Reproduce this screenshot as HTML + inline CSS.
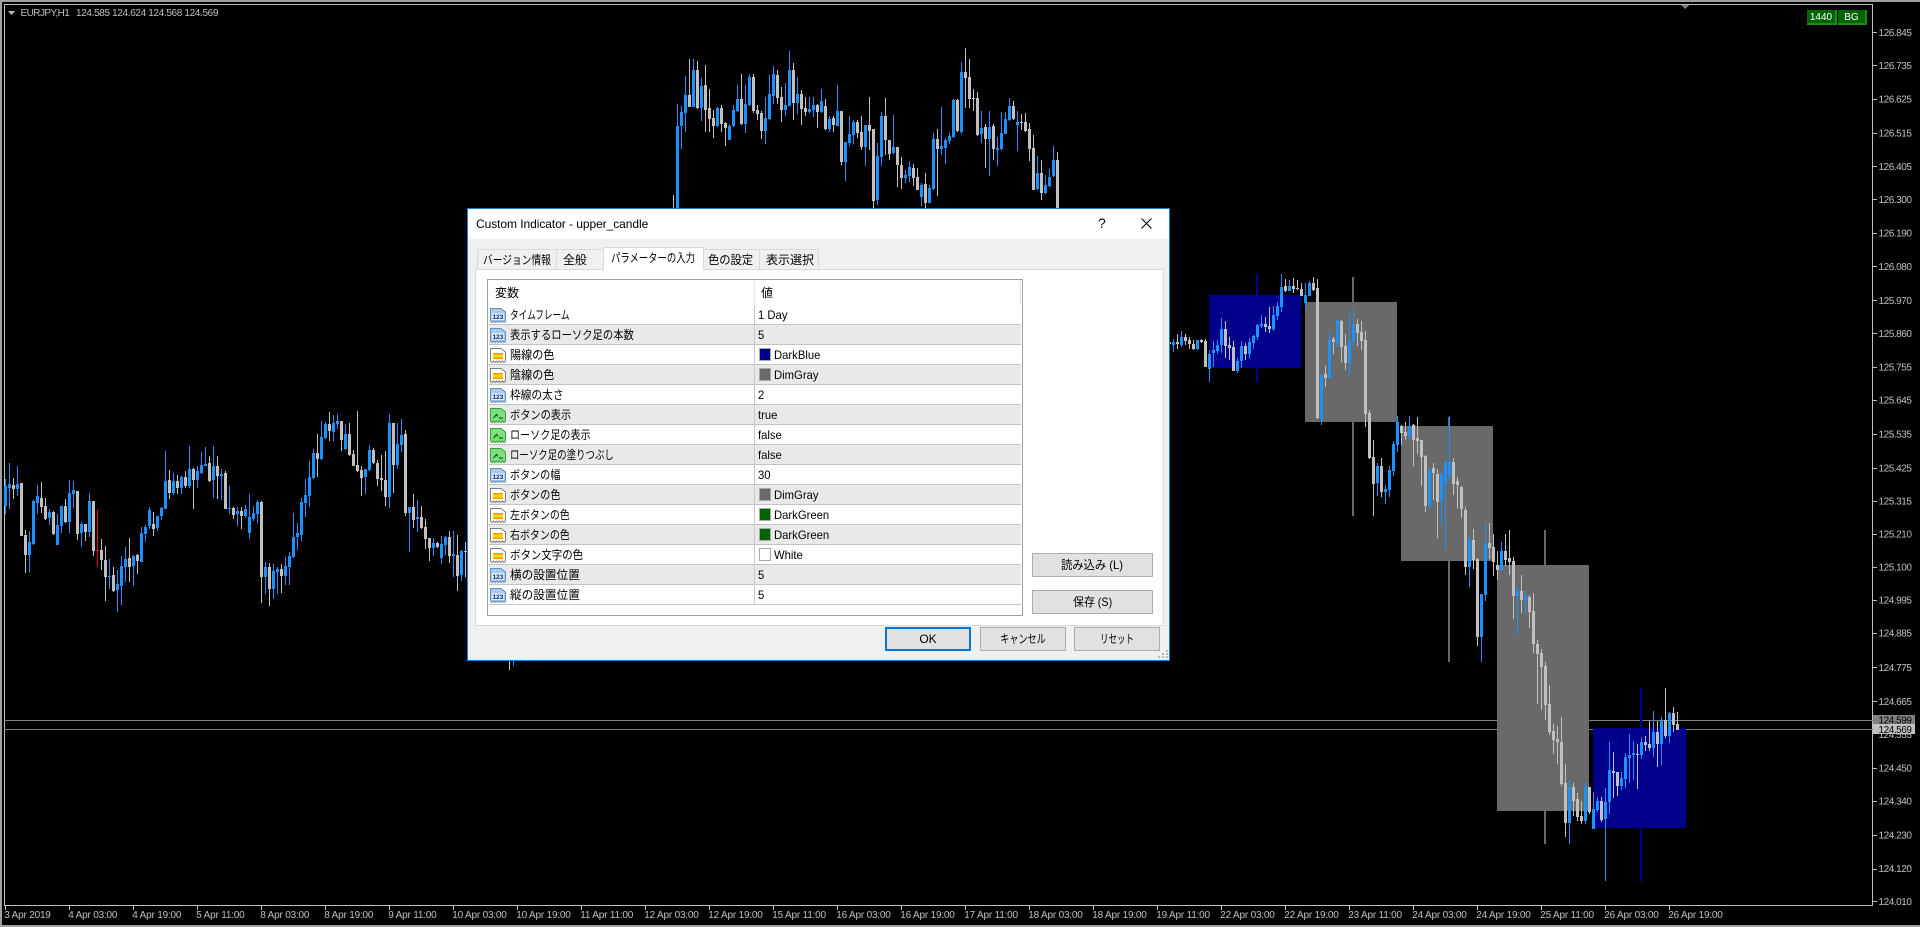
<!DOCTYPE html>
<html lang="ja"><head><meta charset="utf-8"><title>EURJPY,H1</title>
<style>
html,body{margin:0;padding:0;background:#000;width:1920px;height:927px;overflow:hidden}
body{position:relative;font-family:"Liberation Sans","Noto Sans CJK JP",sans-serif;font-size:12px;color:#000}
svg{display:block}
#chart{position:absolute;left:0;top:0}
#chart text{font-family:"Liberation Sans",sans-serif;font-size:10px;fill:#c0c0c0}
.a{position:absolute;white-space:nowrap}
.gb{position:absolute;top:10px;height:15px;background:#006400;border-right:2px solid #1c8a1c;border-bottom:2px solid #1c8a1c;box-sizing:border-box;color:#fff;font-size:10px;line-height:16px;text-align:center}
#dlg{position:absolute;left:467px;top:208px;width:703px;height:453px;box-sizing:border-box;border:1px solid #0a7fd6;background:#f0f0f0}
.t{position:absolute;top:249px;height:21px;box-sizing:border-box;border:1px solid #d9d9d9;background:#f0f0f0;line-height:20px;white-space:nowrap}
.t span,.b span{display:inline-block;white-space:nowrap}
.t span{position:absolute;top:0;transform-origin:left center}
.r{position:absolute;left:489px;width:532px;height:20px;box-sizing:border-box;border-bottom:1px solid #c4c4c4;background:#fff;line-height:21px}
.r.e{background:#e9e9e9}
.r:after{content:"";position:absolute;left:265px;top:0;width:1px;height:20px;background:#c8c8c8}
.r svg{position:absolute;left:1px;top:3px;width:16px;height:15px}
.l{position:absolute;left:21px;top:0;transform-origin:left center;white-space:nowrap}
.v{position:absolute;left:269px;top:0;transform:scaleX(.94);transform-origin:left center;white-space:nowrap}
.s{position:absolute;left:269.5px;top:3px;width:12px;height:13px;box-sizing:border-box;border:1px solid #a8a8a8}
.w{left:285px}
.b{position:absolute;box-sizing:border-box;border:1px solid #adadad;background:#e1e1e1;text-align:center;line-height:22px;white-space:nowrap}
</style></head><body>
<svg id="chart" width="1920" height="927" viewBox="0 0 1920 927" shape-rendering="crispEdges">
<rect width="1920" height="2" fill="#a0a0a0"/>
<rect width="2" height="927" fill="#a0a0a0"/>
<rect y="925" width="1920" height="2" fill="#a0a0a0"/>
<rect x="4" y="4" width="1869" height="1" fill="#c0c0c0"/>
<rect x="4" y="4" width="1" height="902" fill="#c0c0c0"/>
<rect x="1872" y="4" width="1" height="902" fill="#c0c0c0"/>
<rect x="4" y="905" width="1869" height="1" fill="#c0c0c0"/>
<polygon points="1681,5 1689,5 1685,9" fill="#808080"/>
<polygon points="8,11 15,11 11.5,15" fill="#c0c0c0" shape-rendering="auto"/>
<rect x="4" y="720" width="1869" height="1" fill="#808080"/>
<rect x="4" y="729" width="1869" height="1" fill="#808080"/>
<g fill="#00008b"><rect x="1256" y="274" width="2" height="108"/><rect x="1209" y="295" width="92" height="73"/><rect x="1640" y="688" width="2" height="193"/><rect x="1593" y="728" width="93" height="100"/></g>
<g fill="#696969"><rect x="1352" y="277" width="2" height="239"/><rect x="1305" y="302" width="92" height="120"/><rect x="1448" y="417" width="2" height="245"/><rect x="1401" y="426" width="92" height="135"/><rect x="1544" y="530" width="2" height="314"/><rect x="1497" y="565" width="92" height="246"/></g>
<path id="cb" fill="#1e90ff"/><path id="cg" fill="#c0c0c0"/><path id="cr" fill="#ff0000"/>
<g id="yt" fill="#c0c0c0"><rect x="1873" y="32" width="4" height="1"/><rect x="1873" y="65" width="4" height="1"/><rect x="1873" y="99" width="4" height="1"/><rect x="1873" y="133" width="4" height="1"/><rect x="1873" y="166" width="4" height="1"/><rect x="1873" y="199" width="4" height="1"/><rect x="1873" y="233" width="4" height="1"/><rect x="1873" y="266" width="4" height="1"/><rect x="1873" y="300" width="4" height="1"/><rect x="1873" y="333" width="4" height="1"/><rect x="1873" y="367" width="4" height="1"/><rect x="1873" y="400" width="4" height="1"/><rect x="1873" y="434" width="4" height="1"/><rect x="1873" y="468" width="4" height="1"/><rect x="1873" y="501" width="4" height="1"/><rect x="1873" y="534" width="4" height="1"/><rect x="1873" y="567" width="4" height="1"/><rect x="1873" y="600" width="4" height="1"/><rect x="1873" y="633" width="4" height="1"/><rect x="1873" y="667" width="4" height="1"/><rect x="1873" y="701" width="4" height="1"/><rect x="1873" y="768" width="4" height="1"/><rect x="1873" y="801" width="4" height="1"/><rect x="1873" y="835" width="4" height="1"/><rect x="1873" y="869" width="4" height="1"/><rect x="1873" y="901" width="4" height="1"/></g>
<g id="xt" fill="#c0c0c0"></g>
<g text-rendering="geometricPrecision" style="letter-spacing:-.45px" shape-rendering="auto">
<text x="1878.5" y="36">126.845</text><text x="1878.5" y="69">126.735</text><text x="1878.5" y="102.500">126.625</text><text x="1878.5" y="136.500">126.515</text><text x="1878.5" y="170">126.405</text><text x="1878.5" y="203">126.300</text><text x="1878.5" y="236.500">126.190</text><text x="1878.5" y="270">126.080</text><text x="1878.5" y="304">125.970</text><text x="1878.5" y="337">125.860</text><text x="1878.5" y="370.500">125.755</text><text x="1878.5" y="403.500">125.645</text><text x="1878.5" y="437.500">125.535</text><text x="1878.5" y="471.500">125.425</text><text x="1878.5" y="504.500">125.315</text><text x="1878.5" y="537.500">125.210</text><text x="1878.5" y="570.500">125.100</text><text x="1878.5" y="603.500">124.995</text><text x="1878.5" y="636.500">124.885</text><text x="1878.5" y="671">124.775</text><text x="1878.5" y="705">124.665</text><text x="1878.5" y="738">124.555</text><text x="1878.5" y="771.500">124.450</text><text x="1878.5" y="804.500">124.340</text><text x="1878.5" y="838.500">124.230</text><text x="1878.5" y="872">124.120</text><text x="1878.5" y="905">124.010</text>
</g>
<rect x="1873" y="715" width="42" height="10" fill="#808080"/>
<rect x="1873" y="724" width="42" height="10" fill="#c0c0c0"/>
<g shape-rendering="auto" style="letter-spacing:-.45px">
<text x="1878.5" y="723.500" style="fill:#000">124.599</text>
<text x="1878.5" y="733" style="fill:#000">124.569</text>
</g>
<g shape-rendering="auto" style="letter-spacing:-.2px">
<text x="4.300" y="918">3 Apr 2019</text><text x="68.300" y="918">4 Apr 03:00</text><text x="132.300" y="918">4 Apr 19:00</text><text x="196.300" y="918">5 Apr 11:00</text><text x="260.300" y="918">8 Apr 03:00</text><text x="324.300" y="918">8 Apr 19:00</text><text x="388.300" y="918">9 Apr 11:00</text><text x="452.300" y="918">10 Apr 03:00</text><text x="516.300" y="918">10 Apr 19:00</text><text x="580.300" y="918">11 Apr 11:00</text><text x="644.300" y="918">12 Apr 03:00</text><text x="708.300" y="918">12 Apr 19:00</text><text x="772.300" y="918">15 Apr 11:00</text><text x="836.300" y="918">16 Apr 03:00</text><text x="900.300" y="918">16 Apr 19:00</text><text x="964.300" y="918">17 Apr 11:00</text><text x="1028.300" y="918">18 Apr 03:00</text><text x="1092.300" y="918">18 Apr 19:00</text><text x="1156.300" y="918">19 Apr 11:00</text><text x="1220.300" y="918">22 Apr 03:00</text><text x="1284.300" y="918">22 Apr 19:00</text><text x="1348.300" y="918">23 Apr 11:00</text><text x="1412.300" y="918">24 Apr 03:00</text><text x="1476.300" y="918">24 Apr 19:00</text><text x="1540.300" y="918">25 Apr 11:00</text><text x="1604.300" y="918">26 Apr 03:00</text><text x="1668.300" y="918">26 Apr 19:00</text>
</g>
<text x="20.500" y="16" shape-rendering="auto" style="letter-spacing:-.55px">EURJPY,H1</text>
<text x="76" y="16" shape-rendering="auto" style="letter-spacing:-.35px">124.585 124.624 124.568 124.569</text>
</svg>
<div class="gb" style="left:1807px;width:30px">1440</div>
<div class="gb" style="left:1838px;width:29px">BG</div>

<svg width="0" height="0" style="position:absolute">
<defs><linearGradient id="og" x1="0" y1="0" x2="0" y2="1"><stop offset="0" stop-color="#ff8c00"/><stop offset=".5" stop-color="#ffe800"/><stop offset="1" stop-color="#ff8c00"/></linearGradient></defs>
<symbol id="n" viewBox="0 0 16 15"><path d="M.5.5H11L15.500 4V13L14 14.500 12.500 13 11 14.500 9.500 13 8 14.500 6.500 13 5 14.500 3.500 13 2 14.500 .5 13Z" fill="#a6cbee" stroke="#5f93c4"/><rect x="2" y="5" width="12" height="7" fill="#dcebf9"/><text x="8" y="11" font-size="6.500" font-weight="700" text-anchor="middle" fill="#0b2c6e" font-family="Liberation Sans,sans-serif">123</text></symbol>
<symbol id="c" viewBox="0 0 16 15"><path d="M.5.5H11L15.500 4V13L14 14.500 12.500 13 11 14.500 9.500 13 8 14.500 6.500 13 5 14.500 3.500 13 2 14.500 .5 13Z" fill="#fff" stroke="#808080"/><rect x="3" y="5" width="10" height="6" fill="url(#og)"/></symbol>
<symbol id="o" viewBox="0 0 16 15"><path d="M.5.5H11L15.500 4V13L14 14.500 12.500 13 11 14.500 9.500 13 8 14.500 6.500 13 5 14.500 3.500 13 2 14.500 .5 13Z" fill="#7ee07e" stroke="#3ca23c"/><path d="M3.500 10L6.500 6.500 8 8.500M9 10h4" fill="none" stroke="#0b5b12" stroke-width="1.200"/></symbol>
</svg>

<div id="dlg"></div>
<div class="a" style="left:468px;top:209px;width:701px;height:30px;background:#fff"></div>
<div class="a" style="left:476px;top:216px;line-height:16px;letter-spacing:-.06px">Custom Indicator - upper_candle</div>
<div class="a" style="left:1098px;top:215px;font-size:14px;line-height:16px">?</div>
<svg class="a" style="left:1141px;top:218px" width="11" height="11"><path d="M.5.5L10.500 10.500M10.500.5L.5 10.500" stroke="#000" fill="none"/></svg>

<div class="a" style="left:475px;top:269px;width:689px;height:357px;box-sizing:border-box;border:1px solid #d9d9d9;background:#fff"></div>
<div class="t" style="left:477px;width:80px"><span style="left:5px;transform:scaleX(.81)">バージョン情報</span></div>
<div class="t" style="left:556px;width:48px"><span style="left:6px;transform:scaleX(.99)">全般</span></div>
<div class="t" style="left:703px;width:57px"><span style="left:4px;transform:scaleX(.94)">色の設定</span></div>
<div class="t" style="left:759px;width:60px"><span style="left:6px">表示選択</span></div>
<div class="t" style="left:603px;top:247px;width:101px;height:23px;background:#fff;border-bottom:0"><span style="left:7px;transform:scaleX(.78)">パラメーターの入力</span></div>

<div class="a" style="left:487px;top:279px;width:536px;height:337px;box-sizing:border-box;border:1px solid #a0a0a0;background:#fff"></div>
<div class="a" style="left:754px;top:281px;width:1px;height:23px;background:#e4e4e4"></div>
<div class="a" style="left:1020px;top:281px;width:1px;height:23px;background:#e4e4e4"></div>
<div class="a" style="left:495px;top:284px;line-height:18px">変数</div>
<div class="a" style="left:761px;top:284px;line-height:18px">値</div>

<div class="r" style="top:305px"><svg><use href="#n"/></svg><span class="l" style="transform:scaleX(.72)">タイムフレーム</span><span class="v">1 Day</span></div>
<div class="r e" style="top:325px"><svg><use href="#n"/></svg><span class="l" style="transform:scaleX(.86)">表示するローソク足の本数</span><span class="v">5</span></div>
<div class="r" style="top:345px"><svg><use href="#c"/></svg><span class="l" style="transform:scaleX(.925)">陽線の色</span><i class="s" style="background:#00008b"></i><span class="v w">DarkBlue</span></div>
<div class="r e" style="top:365px"><svg><use href="#c"/></svg><span class="l" style="transform:scaleX(.925)">陰線の色</span><i class="s" style="background:#696969"></i><span class="v w">DimGray</span></div>
<div class="r" style="top:385px"><svg><use href="#n"/></svg><span class="l" style="transform:scaleX(.893)">枠線の太さ</span><span class="v">2</span></div>
<div class="r e" style="top:405px"><svg><use href="#o"/></svg><span class="l" style="transform:scaleX(.85)">ボタンの表示</span><span class="v">true</span></div>
<div class="r" style="top:425px"><svg><use href="#o"/></svg><span class="l" style="transform:scaleX(.84)">ローソク足の表示</span><span class="v">false</span></div>
<div class="r e" style="top:445px"><svg><use href="#o"/></svg><span class="l" style="transform:scaleX(.786)">ローソク足の塗りつぶし</span><span class="v">false</span></div>
<div class="r" style="top:465px"><svg><use href="#n"/></svg><span class="l" style="transform:scaleX(.84)">ボタンの幅</span><span class="v">30</span></div>
<div class="r e" style="top:485px"><svg><use href="#c"/></svg><span class="l" style="transform:scaleX(.84)">ボタンの色</span><i class="s" style="background:#696969"></i><span class="v w">DimGray</span></div>
<div class="r" style="top:505px"><svg><use href="#c"/></svg><span class="l" style="transform:scaleX(.83)">左ボタンの色</span><i class="s" style="background:#006400"></i><span class="v w">DarkGreen</span></div>
<div class="r e" style="top:525px"><svg><use href="#c"/></svg><span class="l" style="transform:scaleX(.83)">右ボタンの色</span><i class="s" style="background:#006400"></i><span class="v w">DarkGreen</span></div>
<div class="r" style="top:545px"><svg><use href="#c"/></svg><span class="l" style="transform:scaleX(.87)">ボタン文字の色</span><i class="s" style="background:#fff"></i><span class="v w">White</span></div>
<div class="r e" style="top:565px"><svg><use href="#n"/></svg><span class="l" style="transform:scaleX(.97)">横の設置位置</span><span class="v">5</span></div>
<div class="r" style="top:585px"><svg><use href="#n"/></svg><span class="l" style="transform:scaleX(.97)">縦の設置位置</span><span class="v">5</span></div>

<div class="b" style="left:1032px;top:553px;width:121px;height:24px"><span style="transform:scaleX(.94);transform-origin:center">読み込み (L)</span></div>
<div class="b" style="left:1032px;top:590px;width:121px;height:24px"><span style="transform:scaleX(.9);transform-origin:center">保存 (S)</span></div>
<div class="b" style="left:885px;top:627px;width:86px;height:24px;border:2px solid #0078d7;line-height:20px">OK</div>
<div class="b" style="left:980px;top:627px;width:86px;height:24px"><span style="transform:scaleX(.76);transform-origin:center">キャンセル</span></div>
<div class="b" style="left:1074px;top:627px;width:86px;height:24px"><span style="transform:scaleX(.71);transform-origin:center">リセット</span></div>
<svg class="a" style="left:1158px;top:650px" width="10" height="9"><path d="M8 0h2v2H8zM4 3h2v2H4zM8 3h2v2H8zM0 6h2v2H0zM4 6h2v2H4zM8 6h2v2H8z" fill="#b8b8b8"/></svg>

<script>
var S=[
[0,400,2.97,`b 255 315 235 340 b 250 262 187 323 g 253 265 232 295 b 250 265 195 285 g 247 403 247 405 g 400 460 385 515 b 422 461 390 510 b 300 428 298 430 b 286 307 253 340 g 290 318 245 335 g 315 353 292 355 b 333 351 325 370 g 333 397 330 402 b 372 430 340 430 b 315 375 315 395 g 315 363 293 365 b 277 363 238 395 b 268 280 240 320 g 271 397 270 415 b 369 396 362 437 g 369 393 369 420 b 301 393 277 408 g 301 448 301 462 r 446 449 327 497 g 446 476 412 505 g 476 527 434 598 b 524 527 472 562 g 521 566 495 570 b 547 565 505 630 b 494 553 462 610 b 473 496 436 540 g 470 495 411 540 b 464 494 460 553 g 461 479 458 518 b 396 480 376 480 b 376 398 370 422 b 327 374 318 382 g 369 384 332 404 b 345 381 345 388 b 321 346 318 355 b 241 323 150 325 g 238 277 208 295 b 241 277 218 282 g 241 262 222 280 b 229 262 226 280 g 229 256 211 262 b 205 256 138 262 g 205 238 203 323 b 211 237 195 262 b 193 217 155 220 b 190 197 140 196 g 187 241 167 243 b 196 238 138 290 g 196 226 167 295 b 220 226 205 298 g 217 323 211 325 b 321 324 256 340 g 322 341 319 352 b 331 339 319 373 g 330 345 319 384 b 324 346 312 350 b 348 396 280 413 b 336 352 316 358 b 303 339 298 365 g 303 527 301 604 b 497 527 480 575 g 497 561 485 612 b 509 562 488 592 b 503 512 495 575 g 503 524 488 574 b 494 524 467 550 b 464 497 452 550 b 408 467 336 470 b 396 408 366 445 b 303 402 292 418 b 283 306 235 348 b 229 286 180 318 b 158 232 146 235 g 158 175 100 228 b 110 176 62 178 b 71 112 64 115 g 70 92 37 122 b 68 94 44 122 b 62 71 42 85 g 62 119 68 152 b 101 146 70 148 g 101 163 68 165 g 161 195 148 196 g 193 211 34 213 g 208 231 195 285 b 205 229 205 280 b 149 207 135 210 g 149 187 143 190 g 187 235 177 255 g 232 238 163 270 g 238 289 150 315 b 68 289 42 320 g 68 193 68 275 b 131 193 68 205 b 104 134 55 155 g 101 336 89 345 b 318 336 318 452 g 318 357 278 380 b 348 354 298 392 g 348 381 316 383 g 378 414 354 443 g 411 441 411 478 b 425 439 410 463 g 425 437 422 440 b 428 470 405 488 b 408 431 405 460 g 408 464 388 485 b 458 464 390 525 g 461 524 402 568 b 449 521 445 538 g 447 451 422 525`],
[126,0,1,`g 655 655 650 670 b 655 655 650 666`],
[167,30,3,`g 535 536 495 536 b 288 536 222 536 b 246 288 228 357 b 195 249 138 306 g 195 231 87 231 b 120 231 87 232 g 120 234 93 237 b 168 234 144 273 g 165 240 105 306 g 234 267 177 306 g 264 288 240 324 b 234 288 231 292 g 234 282 225 306 g 279 294 276 348 b 288 330 282 330 b 240 288 225 290 b 207 243 165 246 g 207 282 132 285 b 222 282 165 309 b 141 225 132 228 g 141 243 132 250 g 240 252 225 270 g 249 303 243 327 b 264 303 201 342 b 192 267 135 270 b 132 198 108 222 g 135 204 120 222 g 201 240 171 276 b 225 240 159 258 b 120 228 63 228 g 120 219 99 270 b 192 219 141 252 g 192 237 180 285 g 234 246 201 258 b 237 246 201 249 b 225 240 201 261 g 225 246 222 294 b 213 246 177 249 g 228 297 207 300 b 267 297 258 305 g 264 285 258 306 b 243 288 165 288 g 243 396 243 405 b 336 396 336 453 b 312 339 258 348 b 276 315 270 342 g 276 309 270 324 g 306 351 258 360 b 285 351 285 408 g 285 303 201 360 g 297 513 297 536 b 378 510 339 525 b 258 381 246 408 g 258 330 204 375 g 330 372 330 390 b 351 369 255 372 g 351 405 351 471 g 405 444 381 477 b 435 444 420 459 b 411 438 393 456 g 414 444 402 468 g 441 480 414 480 b 465 501 459 528 g 462 519 429 536 b 474 519 465 519 b 327 477 309 480 g 327 357 297 498 b 348 357 231 375 b 330 354 324 402 b 318 333 309 342 b 210 321 207 324 g 210 303 207 306 b 126 306 96 312 g 126 144 54 234 g 141 207 87 234 g 204 207 177 243 g 204 315 186 318 b 294 312 243 339 g 291 327 282 414 b 291 327 243 438 g 288 357 282 390 b 354 360 321 408 b 309 357 246 360 b 267 312 246 312 b 228 270 204 273 g 228 267 213 270 b 276 285 243 363 g 276 279 252 300 g 276 303 249 305 g 297 357 279 393 g 354 480 315 480 b 429 477 378 480 g 429 489 390 510 b 465 489 435 492 b 441 468 417 471 b 390 438 348 441 g 390 536 366 536`],
[291,270,3,`g 215 222 207 225 b 216 225 207 245 g 216 222 192 237 b 201 225 183 231 g 201 213 192 225 g 210 222 201 237 g 222 237 210 240 b 210 237 210 240 g 210 216 207 219 g 213 291 207 291 b 252 297 240 336 b 240 249 213 291 b 225 243 210 252 b 177 225 144 249 g 177 228 153 264 g 225 234 201 270 g 231 303 213 303 b 273 303 264 309 b 228 273 213 294 g 228 252 219 270 b 216 252 204 267 b 198 219 195 237 b 165 201 162 210 b 162 168 135 174 g 162 171 141 186 g 168 177 111 189 b 135 177 108 183 b 108 138 96 150 b 51 111 12 126 g 48 63 27 66 b 48 63 30 63 g 48 57 24 69 g 54 57 30 60 g 57 78 39 78 b 75 99 39 117 b 39 78 33 78 g 39 60 21 63 g 54 444 27 447 b 315 447 309 465 g 312 324 288 351 b 210 324 189 327 g 207 216 201 252 b 150 219 150 231 g 153 231 150 276 g 228 279 192 300 b 213 279 132 318 b 162 216 117 228 g 162 189 147 228 g 186 213 153 240 g 210 432 183 471 g 429 564 420 567 g 561 642 510 738 b 588 639 579 678 g 588 666 564 681 b 657 666 645 702 b 600 660 588 681 b 522 603 513 618 b 456 525 438 546 g 468 489 465 525 g 486 498 456 510 b 468 498 438 516 g 465 510 462 588 g 504 513 441 552 g 510 561 510 648 g 558 708 555 726 b 600 708 594 717`],
[357,0,1,`g 468 473 463 500 g 474 502 469 538 b 474 501 470 525 b 462 484 461 549 b 462 475 416 481 g 462 484 458 495 g 481 485 477 508 g 487 509 486 518`],
[365,500,3,`g 30 200 21 225 b 120 201 108 261 g 120 180 87 207 g 177 411 174 438 b 282 411 282 486 b 129 285 69 303 g 129 144 69 177 g 141 186 102 228 g 195 210 153 240 b 153 210 126 213 g 153 180 102 198 g 174 186 90 225 g 183 288 171 357 b 273 288 258 405 g 273 300 225 339 b 288 300 270 342 g 291 336 285 384 g 333 432 279 459 g 432 462 420 612 g 459 501 447 630 g 498 615 486 660 g 612 696 555 705 g 693 720 672 762 g 717 726 678 792 g 726 852 651 858 g 849 969 792 1011 b 861 969 840 1032 g 861 903 849 948 g 897 951 879 963 g 948 963 903 972 b 858 963 846 972 g 861 936 861 942 b 927 987 876 987 b 903 930 891 936 g 903 960 891 966 b 906 957 864 1143 b 810 906 726 942 g 813 819 756 894 g 816 858 816 888 b 834 858 816 870 b 771 837 759 864 b 765 774 702 849 b 759 765 723 840 g 762 765 732 867 b 726 765 711 777 g 726 735 708 753 g 732 744 663 753 b 696 744 633 771 g 696 732 663 801 b 663 732 651 795 g 660 708 564 714 b 639 708 636 729 g 639 675 621 696 g 672 690 636 690`]];
var d={b:"",g:"",r:""};
S.forEach(function(s){var t=s[3].split(/\s+/),i=s[0];
 for(var k=0;k+4<t.length;k+=5,i++){
  var c=t[k],Y=function(v){return Math.round(s[1]+v/s[2])},bt=Y(+t[k+1]),bb=Y(+t[k+2]),hi=Y(+t[k+3]),lo=Y(+t[k+4]),x=4+4*i;
  if(bb<=bt)bb=bt+1;
  if(hi>bt)hi=bt; if(lo<bb)lo=bb;
  d[c]+="M"+(x+1)+" "+hi+"h1V"+lo+"h-1zM"+x+" "+bt+"h3V"+bb+"h-3z";
 }});
document.getElementById("cb").setAttribute("d",d.b);
document.getElementById("cg").setAttribute("d",d.g);
document.getElementById("cr").setAttribute("d",d.r);
var xt=document.getElementById("xt"),h="";
for(var n=0;n<27;n++)h+='<rect x="'+(5+64*n)+'" y="906" width="1" height="4"/>';
xt.innerHTML=h;
</script>
</body></html>
